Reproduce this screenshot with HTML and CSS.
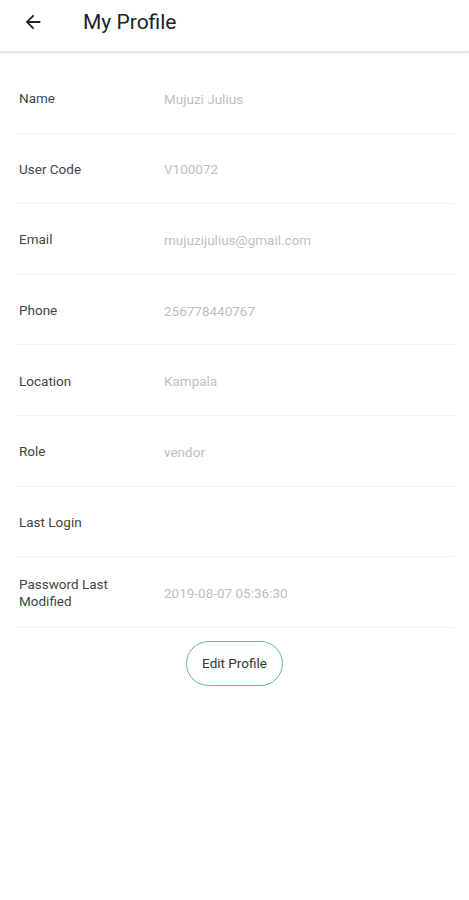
FILE: index.html
```html
<!DOCTYPE html>
<html lang="en">
<head>
<meta charset="utf-8">
<title>My Profile</title>
<link rel="stylesheet" href="styles.css">
</head>
<body>
<header class="appbar">
  <button class="back" aria-label="Back">
    <svg width="22" height="22" viewBox="0 0 24 24"><path d="M20 11H7.83l5.59-5.59L12 4l-8 8 8 8 1.41-1.41L7.83 13H20v-2z" fill="#222"/></svg>
  </button>
  <h1 class="title">My Profile</h1>
</header>
<main class="content">
  <div class="row"><span class="label">Name</span><span class="value">Mujuzi Julius</span></div>
  <div class="row"><span class="label">User Code</span><span class="value">V100072</span></div>
  <div class="row"><span class="label">Email</span><span class="value">mujuzijulius@gmail.com</span></div>
  <div class="row"><span class="label">Phone</span><span class="value">256778440767</span></div>
  <div class="row"><span class="label">Location</span><span class="value">Kampala</span></div>
  <div class="row"><span class="label">Role</span><span class="value">vendor</span></div>
  <div class="row"><span class="label">Last Login</span><span class="value"></span></div>
  <div class="row"><span class="label">Password Last Modified</span><span class="value">2019-08-07 05:36:30</span></div>
  <div class="actions"><button class="edit">Edit Profile</button></div>
</main>
</body>
</html>
```
FILE: styles.css
```css
* { box-sizing: border-box; }
html, body { margin: 0; padding: 0; background: #fff; }
body { font-family: Roboto, "Noto Sans", "Liberation Sans", sans-serif; color: #333; }
.appbar {
  height: 53px;
  display: flex;
  align-items: center;
  padding-left: 22px;
  padding-bottom: 7px;
  background: #fff;
  border-bottom: 2px solid #e8e8e8;
  box-shadow: 0 2px 3px rgba(0,0,0,0.04);
}
.back { border: 0; background: none; padding: 0; width: 22px; height: 22px; display: flex; align-items: center; justify-content: center; }
.title { margin: 0 0 0 39px; font-size: 21px; font-weight: 400; color: #222; }
.content { padding: 10px 14px 0 16px; }
.row {
  display: flex;
  align-items: center;
  height: 70.6px;
  padding-top: 2px;
  border-bottom: 1px solid #f2f2f2;
}
.label { width: 148px; padding-left: 3px; font-size: 13.5px; color: #444; line-height: 17px; padding-right: 30px; }
.value { font-size: 13.5px; color: #c0c0c0; }
.actions { display: flex; justify-content: center; padding-top: 13px; padding-right: 2px; }
.edit {
  width: 97px; height: 45px;
  border: 1.5px solid #5eb8a8;
  border-radius: 23px;
  background: #fff;
  font-family: Roboto, "Noto Sans", "Liberation Sans", sans-serif;
  font-size: 13.5px;
  color: #333;
  padding: 0;
}
```
